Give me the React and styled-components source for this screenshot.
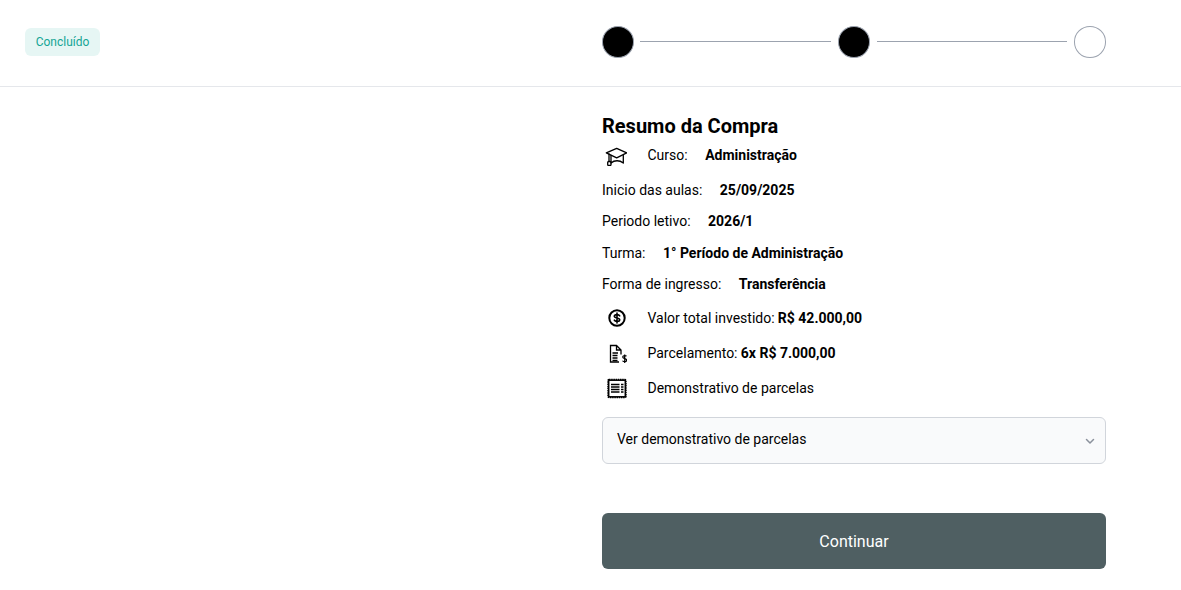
import React from "react";
import styled, { createGlobalStyle } from "styled-components";

const Global = createGlobalStyle`
  html, body { margin: 0; padding: 0; background: #fff; }
  body { font-family: Roboto, "Liberation Sans", sans-serif; color: #000; overflow: hidden; }
  * { box-sizing: border-box; }
`;
const Page = styled.div`width: 1181px; height: 590px; display: flex; flex-direction: column;`;
const Header = styled.header`
  height: 87px; border-bottom: 1px solid #e5e7eb; display: flex; justify-content: space-between;
  padding: 28px 75px 0 25px;
`;
const Badge = styled.span`
  height: 28px; width: 75px; border-radius: 6px; background: #e6f6f4; color: #14a594;
  font-size: 12px; display: flex; align-items: center; justify-content: center;
`;
const Stepper = styled.div`width: 504px; height: 31.5px; margin-top: -2px; display: flex; align-items: center;`;
const Dot = styled.div`
  width: 32px; height: 31.5px; flex: none; border-radius: 50%; border: 1px solid #9ca3af;
  background: ${p => (p.$done ? "#000" : "#fff")};
`;
const Line = styled.div`
  width: ${p => p.$w}px; height: 1px; background: #9ca3af; margin: 0 7px 0 ${p => p.$left}px;
`;
const Main = styled.main`width: 504px; margin-left: 602px; padding-top: 27px;`;
const Title = styled.h1`margin: 0; font-size: 20px; line-height: 24px; font-weight: 700; height: 24px;`;
const Row = styled.div`
  display: flex; align-items: center; font-size: 14px; line-height: 20px; height: ${p => p.$h || 32}px;
`;
const IconBox = styled.span`width: 45.5px; flex: none; display: flex; padding-left: 3px;`;
const Label = styled.span`margin-right: ${p => p.$gap ?? 17.5}px;`;
const Strong = styled.strong`font-weight: 700;`;
const Select = styled.div`
  margin-top: 9px; height: 47px; border: 1px solid #d1d5db; border-radius: 6px; background: #f9fafb;
  display: flex; align-items: center; justify-content: space-between; padding: 0 8px 0 14px; font-size: 14px;
`;
const SelectText = styled.span`margin-bottom: 3px;`;
const Button = styled.button`
  display: block; width: 100%; height: 56px; margin-top: 49px; border: 0; border-radius: 6px; background: #4f5f62;
  color: #fff; font: 400 16px Roboto, sans-serif;
`;

const Cap = () => (
  <svg width="22" height="22" viewBox="0 0 22 22" fill="none" stroke="#000" strokeWidth="1.3" strokeLinejoin="round" strokeLinecap="round">
    <path d="M11.700 4.300 1.300 8.800l10.400 5 10-5z" />
    <path d="M6 11.500v7.500c3.500-3 8.500-3 12.300 0v-7.500" />
    <path d="M4 10v7.500" />
    <rect x="2.700" y="17.500" width="3.300" height="4" rx="1" />
  </svg>
);
const Money = () => (
  <svg width="24" height="20" viewBox="0 0 24 20" fill="none" stroke="#000">
    <circle cx="12" cy="10" r="7.700" strokeWidth="2" />
    <path d="M14.700 7.800C14.300 7 13.400 6.600 12 6.600c-1.700 0-2.700.6-2.700 1.700 0 2.400 5.400 1 5.400 3.400 0 1.100-1 1.700-2.700 1.700-1.400 0-2.300-.4-2.700-1.200M12 5v10" strokeWidth="1.600" strokeLinecap="round" />
  </svg>
);
const Doc = () => (
  <svg width="22" height="22" viewBox="0 0 22 22" fill="none" stroke="#000" strokeWidth="1.300">
    <path d="M14 20H5.500V3.500h6L16 8v4.500M11.500 3.500V8H16" />
    <path d="M7.500 11h5.500M7.500 13.500h5M7.500 16h5M7.500 18.500h5" />
    <path d="M21.500 14.300c-.6-1-3.800-1.100-3.800.8s4 1 4 3-3.500 1.800-4.200.7M19.700 12.500V21" strokeWidth="1.200" />
  </svg>
);
const Receipt = () => (
  <svg width="22" height="22" viewBox="0 0 22 22" fill="none" stroke="#000" strokeWidth="1.500">
    <rect x="3" y="2.500" width="18" height="18" rx="1" strokeDasharray="1.500 .7" strokeWidth="1.400" />
    <rect x="3.700" y="3.200" width="16.600" height="16.600" />
    <path d="M6 7.500h8.500M6 10h8.500M6 12.500h8.500M6 15h8.500M16 7.500h2.500M16 10h2.500M16 12.500h2.500M16 15h2.500" strokeWidth="1.300" />
  </svg>
);
const Chevron = () => (
  <svg width="14" height="14" viewBox="0 0 14 14" fill="none" stroke="#8b919c" strokeWidth="1.500" strokeLinecap="round" strokeLinejoin="round"><path d="m3.500 5.500 3.500 3.500 3.500-3.500" /></svg>
);

export default function App() {
  return (
    <Page>
      <Global />
      <Header>
        <Badge>Concluído</Badge>
        <Stepper><Dot $done /><Line $left={6} $w={191} /><Dot $done /><Line $left={7} $w={190} /><Dot /></Stepper>
      </Header>
      <Main>
        <Title>Resumo da Compra</Title>
        <Row $h={34}><IconBox><Cap /></IconBox><Label>Curso:</Label><Strong>Administração</Strong></Row>
        <Row $h={35}><Label>Inicio das aulas:</Label><Strong>25/09/2025</Strong></Row>
        <Row $h={28}><Label>Periodo letivo:</Label><Strong>2026/1</Strong></Row>
        <Row $h={35}><Label>Turma:</Label><Strong>1° Período de Administração</Strong></Row>
        <Row $h={28}><Label>Forma de ingresso:</Label><Strong>Transferência</Strong></Row>
        <Row $h={40}><IconBox><Money /></IconBox><Label $gap={3.3}>Valor total investido:</Label><Strong>R$ 42.000,00</Strong></Row>
        <Row $h={30}><IconBox><Doc /></IconBox><Label $gap={3.3}>Parcelamento:</Label><Strong>6x R$ 7.000,00</Strong></Row>
        <Row $h={40}><IconBox><Receipt /></IconBox><Label>Demonstrativo de parcelas</Label></Row>
        <Select><SelectText>Ver demonstrativo de parcelas</SelectText><Chevron /></Select>
        <Button>Continuar</Button>
      </Main>
    </Page>
  );
}
